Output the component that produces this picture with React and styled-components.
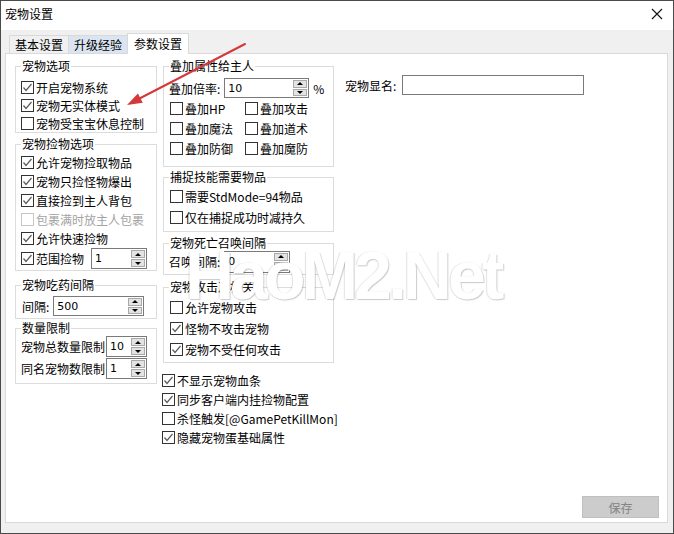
import React from 'react';
import styled, { createGlobalStyle } from 'styled-components';

const GlobalStyle = createGlobalStyle`
  html, body {
    margin: 0;
    padding: 0;
    background: #f0f0f0;
  }
  body {
    font-family: "Noto Sans CJK SC", "Liberation Sans", sans-serif;
    font-size: 12px;
    color: #000;
  }
`;

const Window = styled.div`
  position: relative;
  width: 674px;
  height: 534px;
  box-sizing: border-box;
  border: 1px solid #4a4a4a;
  background: #f0f0f0;
  display: flex;
  flex-direction: column;
  overflow: hidden;
`;

const TitleBar = styled.div`
  height: 29px;
  background: #fff;
  display: flex;
  align-items: flex-start;
  justify-content: space-between;
  padding: 4px 9px 0 4px;
  box-sizing: border-box;
  line-height: 17px;
`;

const CloseBtn = styled.div`
  width: 14px;
  height: 14px;
  margin-top: 2px;
  display: flex;
  align-items: center;
  justify-content: center;
`;

const Body = styled.div`
  flex: 1;
  display: flex;
  flex-direction: column;
  padding: 0 5px 10px 4px;
`;

const TabStrip = styled.div`
  height: 23px;
  display: flex;
  align-items: flex-end;
  padding-left: 5px;
`;

const Tab = styled.div`
  position: relative;
  z-index: ${({ $active }) => ($active ? 2 : 1)};
  height: ${({ $active }) => ($active ? 21 : 18)}px;
  margin-bottom: ${({ $active }) => ($active ? -1 : 0)}px;
  padding: 0 ${({ $active }) => ($active ? 6 : 5)}px;
  box-sizing: border-box;
  border: 1px solid #d9d9d9;
  border-bottom: none;
  margin-left: -1px;
  background: ${({ $bg }) => $bg};
  display: flex;
  align-items: center;
  line-height: 14px;
`;

const Panel = styled.div`
  position: relative;
  z-index: 1;
  flex: 1;
  background: #fff;
  border: 1px solid #d9d9d9;
  display: flex;
  flex-direction: column;
`;

const Columns = styled.div`
  flex: 1;
  display: flex;
  align-items: flex-start;
  padding: 5px 0 0 9px;
`;

const Column = styled.div`
  width: ${({ $w }) => $w}px;
  margin-left: ${({ $ml }) => $ml || 0}px;
  display: flex;
  flex-direction: column;
`;

const GroupBox = styled.fieldset`
  margin: ${({ $mt }) => $mt || 0}px 0 0 0;
  min-width: 0;
  border: 1px solid #dcdcdc;
  padding: ${({ $pt }) => $pt}px 4px ${({ $pb }) => $pb}px 5px;
  display: flex;
  flex-direction: column;
`;

const Legend = styled.legend`
  padding: 0 1px;
  margin: 0;
  line-height: 14px;
  font-size: 12px;
`;

const Row = styled.div`
  height: ${({ $h }) => $h}px;
  display: flex;
  align-items: center;
  gap: ${({ $gap }) => $gap || 0}px;
  padding-left: ${({ $indent }) => $indent || 0}px;
  margin-top: ${({ $mt }) => $mt || 0}px;
`;

const CheckRow = styled.label`
  height: ${({ $h }) => $h}px;
  display: flex;
  align-items: center;
  gap: 2px;
  margin-left: ${({ $ml }) => $ml || 0}px;
  color: ${({ $disabled }) => ($disabled ? '#a3a3a3' : '#000')};
  white-space: nowrap;
`;

const Box = styled.span`
  width: 13px;
  height: 13px;
  box-sizing: border-box;
  border: 1px solid ${({ $disabled }) => ($disabled ? '#c6c6c6' : '#333')};
  background: #fff;
  display: inline-flex;
  align-items: center;
  justify-content: center;
  flex-shrink: 0;
`;

const Grid = styled.div`
  display: grid;
  grid-template-columns: 75px 1fr;
  grid-auto-rows: 20px;
  padding-left: 1px;
`;

const Label = styled.span`
  white-space: nowrap;
`;

const SpinFrame = styled.div`
  width: ${({ $w }) => $w}px;
  height: ${({ $h }) => $h || 20}px;
  box-sizing: border-box;
  border: 1px solid #7a7a7a;
  background: #fff;
  display: flex;
  align-items: stretch;
  flex-shrink: 0;
`;

const SpinValue = styled.span`
  flex: 1;
  padding-left: 3px;
  display: flex;
  align-items: center;
  font-family: "DejaVu Sans", "Liberation Sans", sans-serif;
  font-size: 11px;
`;

const SpinButtons = styled.div`
  width: 15px;
  padding: 1px 1px 1px 0;
  box-sizing: border-box;
  display: flex;
  flex-direction: column;
  gap: 1px;
`;

const SpinBtn = styled.div`
  flex: 1;
  background: #e3e3e3;
  border: 1px solid #a9a9a9;
  display: flex;
  align-items: center;
  justify-content: center;
`;

const Arrow = styled.span`
  width: 0;
  height: 0;
  border-left: 3px solid transparent;
  border-right: 3px solid transparent;
  ${({ $up }) => ($up ? 'border-bottom: 3px solid #000;' : 'border-top: 3px solid #000;')}
`;

const TextInput = styled.div`
  width: 182px;
  height: 20px;
  box-sizing: border-box;
  border: 1px solid #7a7a7a;
  background: #fff;
`;

const RightArea = styled.div`
  display: flex;
  align-items: center;
  gap: 6px;
  margin: 16px 0 0 11px;
`;

const Footer = styled.div`
  display: flex;
  justify-content: flex-end;
  padding: 0 8px 4px 0;
`;

const SaveButton = styled.div`
  width: 77px;
  height: 22px;
  box-sizing: border-box;
  background: #cccccc;
  border: 1px solid #bfbfbf;
  color: #838383;
  display: flex;
  align-items: center;
  justify-content: center;
`;

const Watermark = styled.div`
  position: absolute;
  left: 184px;
  top: 235px;
  font-family: "Liberation Sans", Arial, sans-serif;
  font-weight: bold;
  font-size: 68px;
  letter-spacing: -4px;
  color: #fff;
  text-shadow: 1px 1px 1px rgba(0, 0, 0, 0.2), -1px 0 1px rgba(0, 0, 0, 0.12);
  pointer-events: none;
  z-index: 5;
`;

const Overlay = styled.svg`
  position: absolute;
  left: 0;
  top: 0;
  pointer-events: none;
  z-index: 6;
`;

const Check = ({ checked, disabled, label, h = 18, ml }) => (
  <CheckRow $h={h} $disabled={disabled} $ml={ml}>
    <Box $disabled={disabled}>
      {checked && (
        <svg width="11" height="11" viewBox="0 0 11 11">
          <polyline points="1.5,5.5 4,8.5 9.5,2" fill="none" stroke="#5c5c5c" strokeWidth="1.2" />
        </svg>
      )}
    </Box>
    {label}
  </CheckRow>
);

const Spin = ({ w, h, value }) => (
  <SpinFrame $w={w} $h={h}>
    <SpinValue>{value}</SpinValue>
    <SpinButtons>
      <SpinBtn><Arrow $up /></SpinBtn>
      <SpinBtn><Arrow /></SpinBtn>
    </SpinButtons>
  </SpinFrame>
);

export default function App() {
  return (
    <>
      <GlobalStyle />
      <Window>
        <TitleBar>
          <span>宠物设置</span>
          <CloseBtn>
            <svg width="12" height="12" viewBox="0 0 12 12">
              <path d="M1 1 L11 11 M11 1 L1 11" stroke="#111" strokeWidth="1.1" />
            </svg>
          </CloseBtn>
        </TitleBar>
        <Body>
          <TabStrip>
            <Tab $bg="#f0f0f0">基本设置</Tab>
            <Tab $bg="#dae5f1">升级经验</Tab>
            <Tab $active $bg="#fff">参数设置</Tab>
          </TabStrip>
          <Panel>
            <Columns>
              <Column $w={142}>
                <GroupBox $pt={5} $pb={0}>
                  <Legend>宠物选项</Legend>
                  <Check checked label="开启宠物系统" />
                  <Check checked label="宠物无实体模式" />
                  <Check label="宠物受宝宝休息控制" />
                </GroupBox>
                <GroupBox $mt={4} $pt={2} $pb={1}>
                  <Legend>宠物捡物选项</Legend>
                  <Check checked h={19} label="允许宠物捡取物品" />
                  <Check checked h={19} label="宠物只捡怪物爆出" />
                  <Check checked h={19} label="直接捡到主人背包" />
                  <Check disabled h={19} label="包裹满时放主人包裹" />
                  <Check checked h={19} label="允许快速捡物" />
                  <Row $h={21} $gap={7}>
                    <Check checked h={21} label="范围捡物" />
                    <Spin w={56} h={21} value="1" />
                  </Row>
                </GroupBox>
                <GroupBox $mt={7} $pt={4} $pb={2}>
                  <Legend>宠物吃药间隔</Legend>
                  <Row $h={20} $gap={4} $indent={1}>
                    <Label>间隔:</Label>
                    <Spin w={91} h={20} value="500" />
                  </Row>
                </GroupBox>
                <GroupBox $mt={2} $pt={1} $pb={4}>
                  <Legend>数量限制</Legend>
                  <Row $h={21} $gap={1}>
                    <Label>宠物总数量限制</Label>
                    <Spin w={41} h={21} value="10" />
                  </Row>
                  <Row $h={21} $gap={1} $mt={1}>
                    <Label>同名宠物数限制</Label>
                    <Spin w={41} h={21} value="1" />
                  </Row>
                </GroupBox>
              </Column>

              <Column $w={171} $ml={6}>
                <GroupBox $pt={5} $pb={8}>
                  <Legend>叠加属性给主人</Legend>
                  <Row $h={20} $gap={4}>
                    <Label>叠加倍率:</Label>
                    <Spin w={85} h={20} value="10" />
                    <Label>%</Label>
                  </Row>
                  <Grid>
                    <Check h={20} label="叠加HP" />
                    <Check h={20} label="叠加攻击" />
                    <Check h={20} label="叠加魔法" />
                    <Check h={20} label="叠加道术" />
                    <Check h={20} label="叠加防御" />
                    <Check h={20} label="叠加魔防" />
                  </Grid>
                </GroupBox>
                <GroupBox $mt={3} $pt={2} $pb={3}>
                  <Legend>捕捉技能需要物品</Legend>
                  <Check h={21} ml={1} label="需要StdMode=94物品" />
                  <Check h={21} ml={1} label="仅在捕捉成功时减持久" />
                </GroupBox>
                <GroupBox $mt={4} $pt={1} $pb={2}>
                  <Legend>宠物死亡召唤间隔</Legend>
                  <Row $h={21} $gap={4}>
                    <Label>召唤间隔:</Label>
                    <Spin w={66} h={22} value="0" />
                  </Row>
                </GroupBox>
                <GroupBox $mt={5} $pt={3} $pb={2}>
                  <Legend>宠物攻击及相关</Legend>
                  <Check h={21} ml={1} label="允许宠物攻击" />
                  <Check checked h={21} ml={1} label="怪物不攻击宠物" />
                  <Check checked h={21} ml={1} label="宠物不受任何攻击" />
                </GroupBox>
                <Row $h={8} />
                <Check checked h={19} ml={-1} label="不显示宠物血条" />
                <Check checked h={19} ml={-1} label="同步客户端内挂捡物配置" />
                <Check h={19} ml={-1} label="杀怪触发[@GamePetKillMon]" />
                <Check checked h={19} ml={-1} label="隐藏宠物蛋基础属性" />
              </Column>

              <RightArea>
                <Label>宠物显名:</Label>
                <TextInput />
              </RightArea>
            </Columns>
            <Footer>
              <SaveButton>保存</SaveButton>
            </Footer>
          </Panel>
        </Body>

        <Watermark>HaoM2.Net</Watermark>
        <Overlay width="674" height="534" viewBox="0 0 674 534">
          <line x1="244" y1="43" x2="139.5" y2="97" stroke="#d5383a" strokeWidth="2" strokeLinecap="round" />
          <polygon points="126,104 141.8,101.8 136.9,92.5" fill="#d5383a" />
        </Overlay>
      </Window>
    </>
  );
}
